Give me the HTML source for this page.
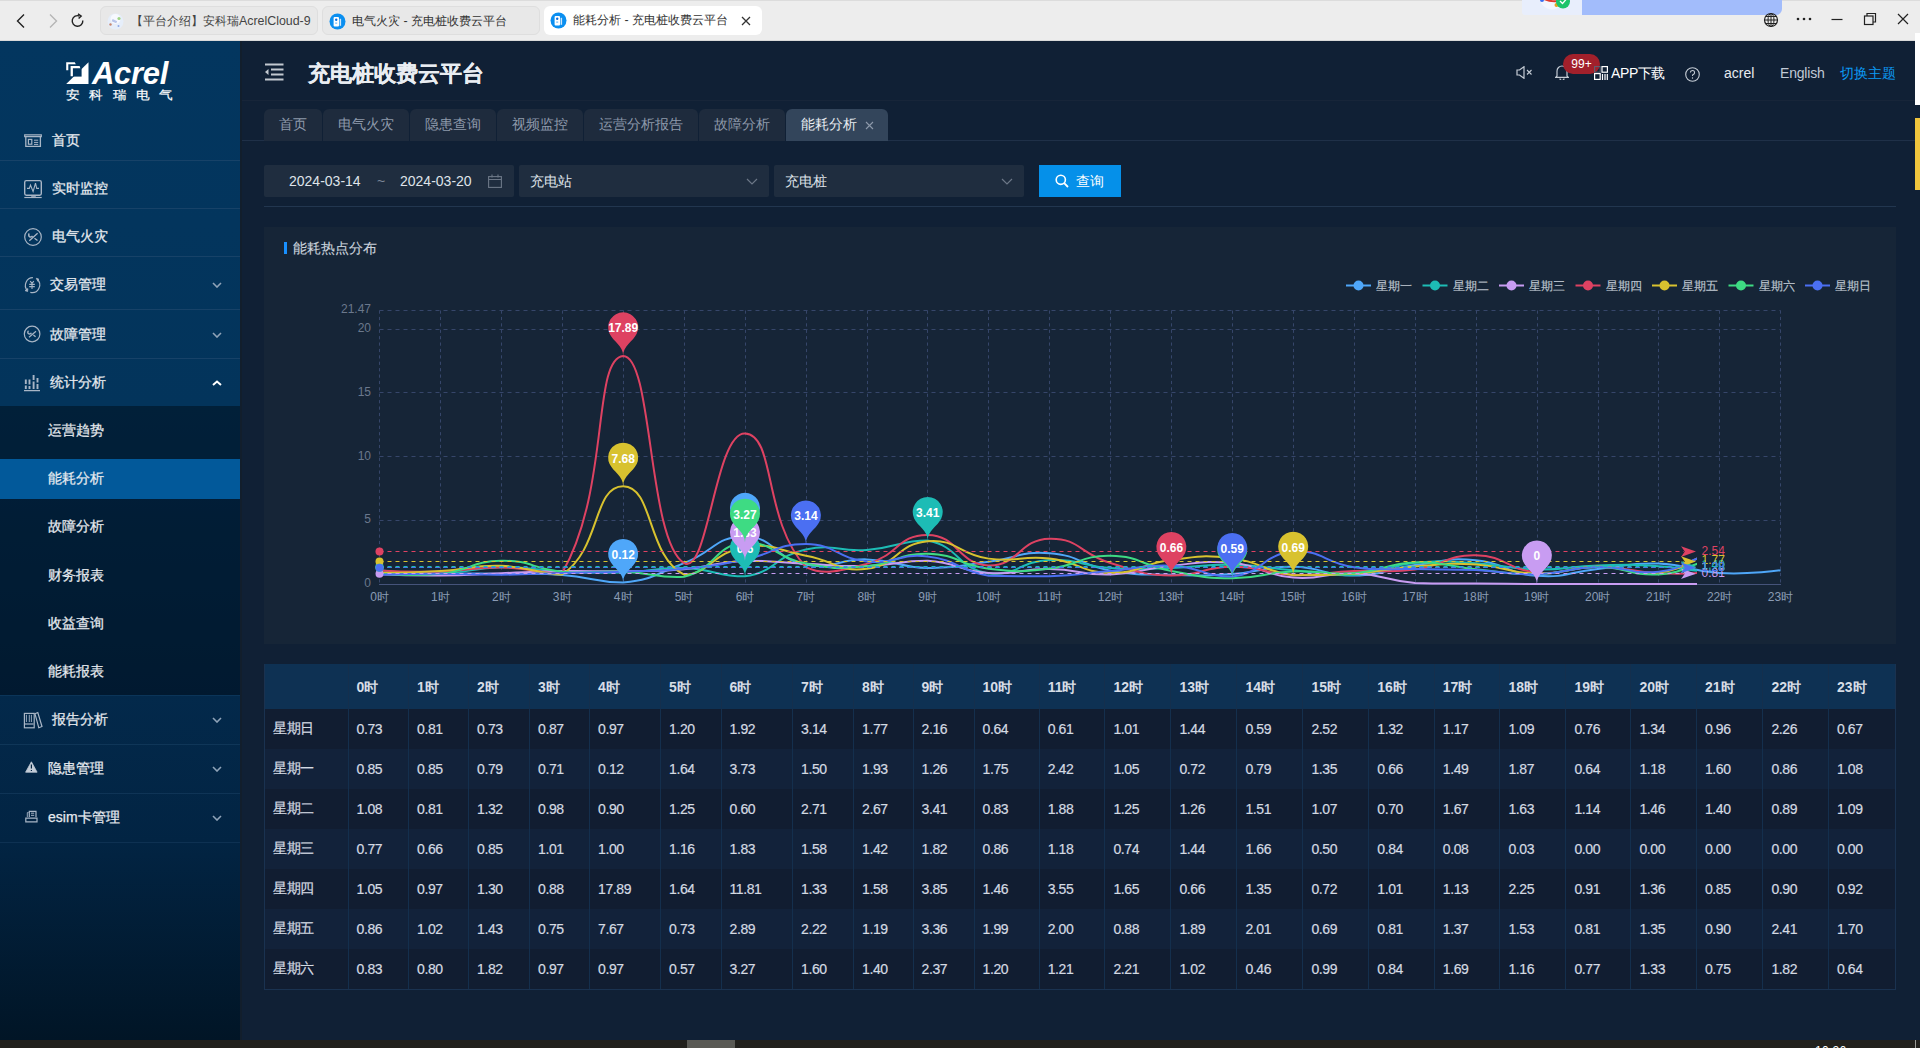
<!DOCTYPE html>
<html><head><meta charset="utf-8"><title>能耗分析 - 充电桩收费云平台</title>
<style>
*{box-sizing:border-box;margin:0;padding:0}
html,body{width:1920px;height:1048px;overflow:hidden;background:#102035;font-family:"Liberation Sans",sans-serif;}
.abs{position:absolute}
/* browser chrome */
#chrome{position:absolute;left:0;top:0;width:1920px;height:41px;background:#ededed;border-bottom:1px solid #d9d9d9}
.btab{position:absolute;top:6px;height:29px;border-radius:6px;font-size:12.4px;color:#333;line-height:29px;white-space:nowrap;overflow:hidden}
.btab .ic{position:absolute;left:8px;top:7px;width:15px;height:15px;border-radius:50%;background:#1a8ae6}
.btab .tx{position:absolute;left:33px;top:0}
/* sidebar */
#side{position:absolute;left:0;top:41px;width:240px;height:999px;background:linear-gradient(#03365f 0px,#03345b 365px,#03294b 654px,#022443 801px,#011526 999px)}
.mi{position:absolute;left:0;width:240px;font-size:14px;color:#e6eaef;-webkit-text-stroke:0.25px #e6eaef}
.mi .t{position:absolute;left:52px;top:50%;transform:translateY(-50%);white-space:nowrap}
.mi .ico{position:absolute;left:24px;top:50%;transform:translateY(-50%)}
.sep{position:absolute;left:0;width:240px;height:1px;background:#174268}
.chev{position:absolute;left:212px;width:10px;height:6px}
.sub{position:absolute;left:0;width:240px;font-size:14px;color:#e6eaef;-webkit-text-stroke:0.25px #e6eaef}
.sub .t{position:absolute;left:48px;top:50%;transform:translateY(-50%)}
/* header */
#hdr{position:absolute;left:240px;top:41px;width:1675px;height:60px;background:#102035;border-bottom:1px solid #172539}
.ttl{position:absolute;left:308px;top:59px;font-size:22px;font-weight:bold;color:#e9edf2;-webkit-text-stroke:0.15px #e9edf2;letter-spacing:0px;white-space:nowrap}
.hx{position:absolute;font-size:14px;white-space:nowrap;line-height:20px}
/* tabs */
.tg{position:absolute;top:109px;height:32px;background:#1e2b3d;border-radius:6px 6px 0 0;font-size:14px;color:#8e9aab;text-align:center;line-height:31px;white-space:nowrap;border-right:1px solid #102035}
.tg.on{background:#33455b;color:#e8ecf1;border-right:none}
/* filter */
.inp{position:absolute;top:165px;height:32px;background:#1f2d3f;border-radius:2px;font-size:14px;color:#dfe4ea;line-height:32px;white-space:nowrap}
.btn{position:absolute;left:1039px;top:165px;width:82px;height:32px;background:#0590e9;border-radius:0;color:#fff;font-size:14px;line-height:32px}
/* chart panel */
#panel{position:absolute;left:264px;top:227px;width:1632px;height:417px;background:#162537}
.yl{font-size:12px;fill:#6b788c}
.xl{font-size:12px;fill:#8a9bb4}
.ml{font-size:12px}
.mp{font-size:12px;font-weight:bold;fill:#fff;stroke-width:0}
.lg{font-size:12px;fill:#bcc4ce;stroke:#bcc4ce;stroke-width:0.15px}
/* table */
.tb{position:absolute;left:264px;top:664px;width:1631.5px;border-collapse:collapse;table-layout:fixed;font-size:14px;color:#d4dae2}
.tb td{border-left:1px solid #142f4d;border-right:1px solid #142f4d;padding:0 0 0 8px;white-space:nowrap;overflow:hidden;letter-spacing:-0.4px}
.tb tr.th td{height:45px;padding-top:2px;letter-spacing:0;background:#0e3153;font-weight:bold;color:#d6dde6}
.tb tr.r0 td,.tb tr.r1 td{-webkit-text-stroke:0.2px #d4dae2}
.tb tr.r0 td{height:40px;background:#111d31}
.tb tr.r1 td{height:40px;background:#12223a}
.tb tr td:first-child{padding-left:8px;border-left-color:#1a3250}
.tb tr td:last-child{border-right-color:#1a3250}
.tb tr:last-child td{border-bottom:1px solid #1a3250}
</style></head><body>

<!-- browser chrome -->
<div id="chrome">
  <svg class="abs" style="left:13px;top:13px" width="16" height="16" viewBox="0 0 16 16"><path d="M11 1.5 L4.5 8 L11 14.5" fill="none" stroke="#222" stroke-width="1.4"/></svg>
  <svg class="abs" style="left:45px;top:13px" width="16" height="16" viewBox="0 0 16 16"><path d="M5 1.5 L11.5 8 L5 14.5" fill="none" stroke="#b5b5b5" stroke-width="1.4"/></svg>
  <svg class="abs" style="left:70px;top:13px" width="16" height="16" viewBox="0 0 16 16"><path d="M12.8 7.5 A5.3 5.3 0 1 1 9.5 3" fill="none" stroke="#222" stroke-width="1.4"/><path d="M8 0.8 L11.2 3 L8.6 5.6" fill="none" stroke="#222" stroke-width="1.4"/></svg>
  <div class="btab" style="left:100px;width:218px;background:#e8e8e8;border:1px solid #dedede">
    <svg class="abs" style="left:6px;top:6px" width="17" height="17" viewBox="0 0 17 17"><circle cx="8.5" cy="8.5" r="8" fill="#e6eefa"/><circle cx="8.5" cy="6" r="5" fill="#f7f9fe"/><rect x="5" y="7" width="5" height="2.4" fill="#b8c4ea" transform="rotate(25 7.5 8)"/><circle cx="12" cy="5.5" r="1.6" fill="#9fd486"/><circle cx="3.5" cy="11.5" r="1.2" fill="#c9866e"/><circle cx="11.5" cy="13" r="1" fill="#8fa8e8"/></svg><div class="tx" style="left:30px;color:#444">【平台介绍】安科瑞AcrelCloud-9</div></div>
  <div class="btab" style="left:322px;width:218px;background:#e8e8e8;border:1px solid #dedede">
    <svg class="abs" style="left:6px;top:6px" width="17" height="17" viewBox="0 0 17 17"><circle cx="8.5" cy="8.5" r="8" fill="#0b8ff0"/><rect x="4.6" y="4" width="5.4" height="9.5" rx="1" fill="#fff"/><circle cx="7.2" cy="6.8" r="1.2" fill="#0b6fe0"/><rect x="6.2" y="9.6" width="2" height="1" fill="#5ab0f5"/><rect x="10.6" y="5.8" width="1.5" height="7" fill="#cfe6fb"/></svg><div class="tx" style="left:29px;color:#333">电气火灾 - 充电桩收费云平台</div></div>
  <div class="btab" style="left:544px;width:218px;background:#fff">
    <svg class="abs" style="left:6px;top:6px" width="17" height="17" viewBox="0 0 17 17"><circle cx="8.5" cy="8.5" r="8" fill="#0b8ff0"/><rect x="4.6" y="4" width="5.4" height="9.5" rx="1" fill="#fff"/><circle cx="7.2" cy="6.8" r="1.2" fill="#0b6fe0"/><rect x="6.2" y="9.6" width="2" height="1" fill="#5ab0f5"/><rect x="10.6" y="5.8" width="1.5" height="7" fill="#cfe6fb"/></svg><div class="tx" style="left:29px;color:#333">能耗分析 - 充电桩收费云平台</div>
    <svg class="abs" style="left:197px;top:10px" width="10" height="10" viewBox="0 0 10 10"><path d="M1 1L9 9M9 1L1 9" stroke="#333" stroke-width="1.3"/></svg></div>
  <div class="abs" style="left:0;top:0;width:1920px;height:1px;background:#dcdcdc"></div>
  <div class="abs" style="left:1522px;top:0;width:60px;height:15px;background:#e8eefc;border-radius:0 0 0 3px"></div>
  <svg class="abs" style="left:1522px;top:0" width="60" height="15" viewBox="0 0 60 15"><circle cx="30" cy="-3" r="12.5" fill="#f4f6fd"/><path d="M22 -1Q29 2 36 1" stroke="#e0392b" stroke-width="2" fill="none"/><circle cx="20" cy="0" r="2" fill="#3a6cf0"/><circle cx="34.5" cy="5" r="2" fill="#e8a21a"/><circle cx="41" cy="1.5" r="7" fill="#1cc46a"/><path d="M38 1L40.5 3.5L44 -0.5" stroke="#fff" stroke-width="1.3" fill="none"/></svg>
  <div class="abs" style="left:1582px;top:0;width:200px;height:15px;background:#a2bcfb;border-radius:0 0 6px 0"></div>
  <svg class="abs" style="left:1763px;top:12px" width="16" height="16" viewBox="0 0 16 16"><circle cx="8" cy="8" r="6.5" fill="none" stroke="#222" stroke-width="1.2"/><path d="M1.5 8H14.5M8 1.5V14.5M3 4.5H13M3 11.5H13" stroke="#222" stroke-width="1"/><ellipse cx="8" cy="8" rx="3" ry="6.5" fill="none" stroke="#222" stroke-width="1"/></svg>
  <svg class="abs" style="left:1795px;top:13px" width="18" height="12" viewBox="0 0 18 12"><circle cx="3" cy="6" r="1.3" fill="#222"/><circle cx="9" cy="6" r="1.3" fill="#222"/><circle cx="15" cy="6" r="1.3" fill="#222"/></svg>
  <svg class="abs" style="left:1830px;top:13px" width="14" height="14" viewBox="0 0 14 14"><path d="M1.5 6.5H12.5" stroke="#222" stroke-width="1.2"/></svg>
  <svg class="abs" style="left:1863px;top:12px" width="14" height="14" viewBox="0 0 14 14"><rect x="1.5" y="4" width="8.5" height="8.5" fill="none" stroke="#222" stroke-width="1.2"/><path d="M4 4V1.5H12.5V10H10" fill="none" stroke="#222" stroke-width="1.2"/></svg>
  <svg class="abs" style="left:1896px;top:12px" width="14" height="14" viewBox="0 0 14 14"><path d="M2 2L12 12M12 2L2 12" stroke="#222" stroke-width="1.2"/></svg>
</div>
<div class="abs" style="left:1915px;top:33px;width:5px;height:72px;background:#fff"></div>
<div class="abs" style="left:1915px;top:118px;width:5px;height:72px;background:#f0c53d"></div>

<!-- sidebar -->
<div id="side"></div>
<!-- logo -->
<svg class="abs" style="left:60px;top:58px" width="34" height="30" viewBox="60 58 34 30">
  <path d="M66.2 84 L88.5 84 L88.5 62.3 Z" fill="#fff"/><rect x="73.2" y="68.3" width="8.4" height="8.3" fill="#03355e"/>
  <path d="M66.2 62.2 H74.8 L75.8 64.2 H68.3 V70.3 H66.2 Z" fill="#fff"/>
  <path d="M70.6 66 H79.6 L80.4 68.2 H72.9 V76.2 H70.6 Z" fill="#fff"/>
</svg>
<div class="abs" style="left:92px;top:54px;font-size:31px;font-weight:bold;font-style:italic;color:#fff;line-height:40px;letter-spacing:-0.3px;transform:scaleX(1.0)">Acrel</div>
<div class="abs" style="left:66px;top:88px;font-size:14px;color:#fff;line-height:17px;letter-spacing:9.3px;white-space:nowrap;-webkit-text-stroke:0.2px #fff;transform:scaleY(0.88);transform-origin:0 0">安科瑞电气</div>


<!-- top level items -->
<div class="mi" style="top:117px;height:48px"><span class="t">首页</span></div>
<div class="sep" style="top:160px"></div>
<div class="mi" style="top:165px;height:48px"><span class="t">实时监控</span></div>
<div class="sep" style="top:208px"></div>
<div class="mi" style="top:213px;height:48px"><span class="t">电气火灾</span></div>
<div class="sep" style="top:256px"></div>
<div class="mi" style="top:259px;height:52px"><span class="t" style="left:50px">交易管理</span>
<svg class="chev" style="top:23px" viewBox="0 0 10 6"><path d="M1 1L5 5L9 1" fill="none" stroke="#8fa3b8" stroke-width="1.6"/></svg></div>
<div class="sep" style="top:309px"></div>
<div class="mi" style="top:311px;height:48px"><span class="t" style="left:50px">故障管理</span>
<svg class="chev" style="top:21px" viewBox="0 0 10 6"><path d="M1 1L5 5L9 1" fill="none" stroke="#8fa3b8" stroke-width="1.6"/></svg></div>
<div class="sep" style="top:358px"></div>
<div class="mi" style="top:359px;height:48px"><span class="t" style="left:50px">统计分析</span>
<svg class="chev" style="top:21px" viewBox="0 0 10 6"><path d="M1 5L5 1.5L9 5" fill="none" stroke="#fff" stroke-width="2"/></svg></div>

<!-- submenu -->
<div class="abs" style="left:0;top:406px;width:240px;height:289px;background:rgba(0,4,12,0.42)"></div>
<div class="sub" style="top:407px;height:48px"><span class="t">运营趋势</span></div>
<div class="sub" style="top:459px;height:40px;background:#02599a"><span class="t">能耗分析</span></div>
<div class="sub" style="top:503px;height:48px"><span class="t">故障分析</span></div>
<div class="sub" style="top:552px;height:48px"><span class="t">财务报表</span></div>
<div class="sub" style="top:600px;height:48px"><span class="t">收益查询</span></div>
<div class="sub" style="top:648px;height:48px"><span class="t">能耗报表</span></div>

<!-- lower items -->

<div class="sep" style="top:695px;background:#0b3559"></div>
<div class="mi" style="top:695px;height:49px"><span class="t">报告分析</span>
<svg class="chev" style="top:22px" viewBox="0 0 10 6"><path d="M1 1L5 5L9 1" fill="none" stroke="#8fa3b8" stroke-width="1.6"/></svg></div>
<div class="sep" style="top:744px;background:#0f3658"></div>
<div class="mi" style="top:744px;height:49px"><span class="t" style="left:48px">隐患管理</span>
<svg class="chev" style="top:22px" viewBox="0 0 10 6"><path d="M1 1L5 5L9 1" fill="none" stroke="#8fa3b8" stroke-width="1.6"/></svg></div>
<div class="sep" style="top:793px;background:#0f3456"></div>
<div class="mi" style="top:793px;height:49px"><span class="t" style="left:48px">esim卡管理</span>
<svg class="chev" style="top:22px" viewBox="0 0 10 6"><path d="M1 1L5 5L9 1" fill="none" stroke="#8fa3b8" stroke-width="1.6"/></svg></div>
<div class="sep" style="top:842px;background:#0e3152"></div>

<svg class="abs" style="left:0;top:0;overflow:visible" width="240" height="1048" viewBox="0 0 240 1048">
<g fill="none" stroke="#a9b6c6">
 <!-- home -->
 <path d="M24.7 134.8H41.3V136.6H24.7Z" stroke-width="1.2" fill="none"/>
 <path d="M25.8 136.6V146.4H40.4V136.6" stroke-width="1.3"/>
 <rect x="28.4" y="139.4" width="3.4" height="4.8" stroke-width="1.2"/>
 <path d="M34 140.2H38.2M34 142.4H38.2M34 144.4H38.2" stroke-width="1"/>
 <!-- monitor -->
 <rect x="24.7" y="180.6" width="16.6" height="14.6" rx="1.6" stroke-width="1.4"/>
 <path d="M27 188.4H29.3L30.5 185L33.1 191.6L35.5 183.2L36.7 188.4H39" stroke-width="1.1"/>
 <path d="M31.2 196H35.8" stroke-width="1.6"/>
 <path d="M24.3 197.5H41.7" stroke-width="1.2"/>
 <!-- tools circle 1 -->
 <circle cx="33" cy="237" r="8.3" stroke-width="1.2"/>
 <path d="M29.3 240.8L37.6 233.2M34.5 238.2L37.5 240.6" stroke-width="1.3"/>
 <path d="M29.3 233.5A2 2 0 1 0 32.5 235.8" stroke-width="1.5"/>
 <!-- exchange -->
 <path d="M32.9 277.7A7.6 7.6 0 0 0 27.2 290.2" stroke-width="1.2"/>
 <path d="M30.3 292.3A7.6 7.6 0 0 0 37.1 279.2" stroke-width="1.2"/>
 <path d="M25 290.6L27.8 288.6L27.6 291.5Z" fill="#a9b6c6" stroke-width="0.8"/>
 <path d="M36.3 278.3L38.7 279L37.9 281.3Z" fill="#a9b6c6" stroke-width="0.8"/>
 <path d="M30.2 281.2L32 283.4L33.8 281.2M29.2 284.4H34.8M29.2 286.6H34.8M32 283.4V289" stroke-width="1.1"/>
 <!-- tools circle 2 -->
 <circle cx="32.1" cy="334" r="7.8" stroke-width="1.2"/>
 <path d="M29 337.2L36 331.2M33.4 335L35.6 336.8" stroke-width="1.2"/>
 <path d="M28.5 330.8A1.8 1.8 0 1 0 31.3 332.8" stroke-width="1.4"/>
 <!-- stats -->
 <path d="M24 390.6H40" stroke-width="1.3"/>
 <path d="M25.8 379.5V384M25.8 385.5V389M29.5 379.6V384.5M29.5 386V389M33.6 375V380M33.6 381.5V389M37.5 378V382.5M37.5 384V389" stroke-width="1.9"/>
 <!-- report -->
 <rect x="24.4" y="713.4" width="9.8" height="14.4" stroke-width="1.2"/>
 <path d="M26.4 714.8V722M29.3 714.8V722M31.4 714.8V722" stroke-width="0.9"/>
 <path d="M25 724H33.6" stroke-width="1.2"/>
 <path d="M35 713.8L37.8 712.5L42 726.5L38.8 727.8Z" stroke-width="1.2"/>
 <!-- esim -->
 <path d="M29.3 817V811.3H36V817" stroke-width="1.2"/>
 <path d="M28.6 812.6H27.3V817" stroke-width="0.9"/>
 <path d="M31 813.2H34.2M31 815.3H34.2" stroke-width="1"/>
 <path d="M25.8 818.2H37V821.8H25.8Z" stroke-width="1.2"/>
</g>
 <!-- warning -->
 <path d="M31.4 761.8L37.1 772.2H25.6Z" fill="#c3ccd7" stroke="#c3ccd7" stroke-width="0.8" stroke-linejoin="round"/>
 <path d="M31.4 764.6V768.6M31.4 769.9V770.9" stroke="#02223f" stroke-width="1.2"/>
</svg>


<!-- header -->
<div id="hdr"></div>
<svg class="abs" style="left:265px;top:63px" width="19" height="18" viewBox="0 0 19 18"><path d="M0 1.5H18.5M6 6.5H18.5M6 11.5H18.5M0 16.5H18.5" stroke="#c2c8d0" stroke-width="2"/><path d="M0 9L3.5 6V12Z" fill="#c2c8d0"/></svg>
<div class="ttl">充电桩收费云平台</div>
<!-- right icons -->
<svg class="abs" style="left:1516px;top:66px" width="18" height="13" viewBox="0 0 18 13"><path d="M1 4H3.5L8 0.7V12.3L3.5 9H1Z" fill="none" stroke="#c5ccd5" stroke-width="1.2"/><path d="M11 4L15.5 8.5M15.5 4L11 8.5" stroke="#c5ccd5" stroke-width="1.1"/></svg>
<svg class="abs" style="left:1555px;top:64px" width="14" height="16" viewBox="0 0 14 16"><path d="M2 12V7A5 5 0 0 1 12 7V12L13.3 13.3H0.7Z" fill="none" stroke="#c5ccd5" stroke-width="1.2"/><path d="M5 14.5A2 2 0 0 0 9 14.5" fill="none" stroke="#c5ccd5" stroke-width="1.2"/></svg>
<div class="abs" style="left:1563px;top:54px;width:37px;height:20px;border-radius:10px;background:#a2202b;color:#fff;font-size:12px;line-height:20px;text-align:center">99+</div>
<svg class="abs" style="left:1594px;top:66px" width="14" height="14" viewBox="0 0 14 14"><rect x="0.6" y="7.6" width="5.6" height="5.8" fill="none" stroke="#fff" stroke-width="1.2"/><rect x="8" y="0.6" width="5.4" height="5.6" fill="none" stroke="#fff" stroke-width="1.2"/><path d="M8.5 8V14M11 8V14M13.3 8V14" stroke="#fff" stroke-width="1.2"/><rect x="0.6" y="0.6" width="5.6" height="5.6" fill="none" stroke="#5a6577" stroke-width="1"/></svg>
<div class="hx" style="left:1611px;top:63px;color:#fff;letter-spacing:-0.4px">APP下载</div>
<svg class="abs" style="left:1685px;top:67px" width="15" height="15" viewBox="0 0 15 15"><circle cx="7.5" cy="7.5" r="6.8" fill="none" stroke="#c5ccd5" stroke-width="1.1"/><path d="M5.4 5.6A2.1 2.1 0 1 1 8 7.6C7.5 7.8 7.5 8.3 7.5 9" fill="none" stroke="#c5ccd5" stroke-width="1.1"/><circle cx="7.5" cy="11" r="0.7" fill="#c5ccd5"/></svg>
<div class="hx" style="left:1724px;top:63px;color:#e6eaef">acrel</div>
<div class="hx" style="left:1780px;top:63px;color:#c2cad6;letter-spacing:-0.2px">English</div>
<div class="hx" style="left:1840px;top:63px;color:#0c99f3">切换主题</div>

<!-- tabs -->
<div class="abs" style="left:240px;top:140px;width:1675px;height:1px;background:#1f3048"></div>
<div class="tg" style="left:264px;width:59px">首页</div>
<div class="tg" style="left:323px;width:87px">电气火灾</div>
<div class="tg" style="left:410px;width:87px">隐患查询</div>
<div class="tg" style="left:497px;width:87px">视频监控</div>
<div class="tg" style="left:584px;width:115px">运营分析报告</div>
<div class="tg" style="left:699px;width:87px">故障分析</div>
<div class="tg on" style="left:786px;width:102px;text-align:left;padding-left:15px">能耗分析<svg class="abs" style="left:79px;top:12px" width="9" height="9" viewBox="0 0 9 9"><path d="M1 1L8 8M8 1L1 8" stroke="#8e9aab" stroke-width="1.1"/></svg></div>

<!-- filters -->
<div class="inp" style="left:264px;width:250px"><span class="abs" style="left:25px">2024-03-14</span><span class="abs" style="left:113px;color:#7d8898">~</span><span class="abs" style="left:136px">2024-03-20</span>
<svg class="abs" style="left:224px;top:9px" width="14" height="14" viewBox="0 0 14 14"><rect x="0.6" y="2.6" width="12.8" height="10.8" fill="none" stroke="#6c7787" stroke-width="1.1"/><path d="M0.6 5.5H13.4M4 0.5V3.5M10 0.5V3.5" stroke="#6c7787" stroke-width="1.1"/></svg></div>
<div class="inp" style="left:519px;width:250px"><span class="abs" style="left:11px">充电站</span><svg class="abs" style="left:227px;top:13px" width="12" height="8" viewBox="0 0 12 8"><path d="M1 1L6 6L11 1" fill="none" stroke="#6c7787" stroke-width="1.2"/></svg></div>
<div class="inp" style="left:774px;width:250px"><span class="abs" style="left:11px">充电桩</span><svg class="abs" style="left:227px;top:13px" width="12" height="8" viewBox="0 0 12 8"><path d="M1 1L6 6L11 1" fill="none" stroke="#6c7787" stroke-width="1.2"/></svg></div>
<div class="btn"><svg class="abs" style="left:16px;top:9px" width="14" height="14" viewBox="0 0 14 14"><circle cx="5.8" cy="5.8" r="4.6" fill="none" stroke="#fff" stroke-width="1.6"/><path d="M9.2 9.2L13 13" stroke="#fff" stroke-width="1.8"/></svg><span class="abs" style="left:37px">查询</span></div>
<div class="abs" style="left:264px;top:206px;width:1632px;height:1px;background:#22364f"></div>


<div class="abs" style="left:240px;top:41px;width:2px;height:999px;background:#121e2c"></div>
<!-- chart panel -->
<div id="panel"></div>
<div class="abs" style="left:284px;top:242px;width:3px;height:12px;background:#1890ff"></div>
<div class="abs" style="left:293px;top:239px;font-size:14px;color:#c9d1db;line-height:18px;-webkit-text-stroke:0.15px #c9d1db">能耗热点分布</div>
<svg width="1920" height="1048" viewBox="0 0 1920 1048" style="position:absolute;left:0;top:0">
<defs><clipPath id="clp"><rect x="300" y="280" width="1397" height="330"/></clipPath></defs>
<line x1="379.5" y1="520.5" x2="1780.5" y2="520.5" stroke="#36466a" stroke-width="1" stroke-dasharray="4 4"/>
<line x1="379.5" y1="456.5" x2="1780.5" y2="456.5" stroke="#36466a" stroke-width="1" stroke-dasharray="4 4"/>
<line x1="379.5" y1="392.5" x2="1780.5" y2="392.5" stroke="#36466a" stroke-width="1" stroke-dasharray="4 4"/>
<line x1="379.5" y1="329.5" x2="1780.5" y2="329.5" stroke="#36466a" stroke-width="1" stroke-dasharray="4 4"/>
<line x1="379.5" y1="310.5" x2="1780.5" y2="310.5" stroke="#36466a" stroke-width="1" stroke-dasharray="4 4"/>
<line x1="379.5" y1="310.5" x2="379.5" y2="584" stroke="#36466a" stroke-width="1" stroke-dasharray="3.2 3.2"/>
<line x1="440.5" y1="310.5" x2="440.5" y2="584" stroke="#36466a" stroke-width="1" stroke-dasharray="3.2 3.2"/>
<line x1="501.5" y1="310.5" x2="501.5" y2="584" stroke="#36466a" stroke-width="1" stroke-dasharray="3.2 3.2"/>
<line x1="562.5" y1="310.5" x2="562.5" y2="584" stroke="#36466a" stroke-width="1" stroke-dasharray="3.2 3.2"/>
<line x1="623.5" y1="310.5" x2="623.5" y2="584" stroke="#36466a" stroke-width="1" stroke-dasharray="3.2 3.2"/>
<line x1="684.5" y1="310.5" x2="684.5" y2="584" stroke="#36466a" stroke-width="1" stroke-dasharray="3.2 3.2"/>
<line x1="745.5" y1="310.5" x2="745.5" y2="584" stroke="#36466a" stroke-width="1" stroke-dasharray="3.2 3.2"/>
<line x1="806.5" y1="310.5" x2="806.5" y2="584" stroke="#36466a" stroke-width="1" stroke-dasharray="3.2 3.2"/>
<line x1="867.5" y1="310.5" x2="867.5" y2="584" stroke="#36466a" stroke-width="1" stroke-dasharray="3.2 3.2"/>
<line x1="927.5" y1="310.5" x2="927.5" y2="584" stroke="#36466a" stroke-width="1" stroke-dasharray="3.2 3.2"/>
<line x1="988.5" y1="310.5" x2="988.5" y2="584" stroke="#36466a" stroke-width="1" stroke-dasharray="3.2 3.2"/>
<line x1="1049.5" y1="310.5" x2="1049.5" y2="584" stroke="#36466a" stroke-width="1" stroke-dasharray="3.2 3.2"/>
<line x1="1110.5" y1="310.5" x2="1110.5" y2="584" stroke="#36466a" stroke-width="1" stroke-dasharray="3.2 3.2"/>
<line x1="1171.5" y1="310.5" x2="1171.5" y2="584" stroke="#36466a" stroke-width="1" stroke-dasharray="3.2 3.2"/>
<line x1="1232.5" y1="310.5" x2="1232.5" y2="584" stroke="#36466a" stroke-width="1" stroke-dasharray="3.2 3.2"/>
<line x1="1293.5" y1="310.5" x2="1293.5" y2="584" stroke="#36466a" stroke-width="1" stroke-dasharray="3.2 3.2"/>
<line x1="1354.5" y1="310.5" x2="1354.5" y2="584" stroke="#36466a" stroke-width="1" stroke-dasharray="3.2 3.2"/>
<line x1="1415.5" y1="310.5" x2="1415.5" y2="584" stroke="#36466a" stroke-width="1" stroke-dasharray="3.2 3.2"/>
<line x1="1476.5" y1="310.5" x2="1476.5" y2="584" stroke="#36466a" stroke-width="1" stroke-dasharray="3.2 3.2"/>
<line x1="1537.5" y1="310.5" x2="1537.5" y2="584" stroke="#36466a" stroke-width="1" stroke-dasharray="3.2 3.2"/>
<line x1="1598.5" y1="310.5" x2="1598.5" y2="584" stroke="#36466a" stroke-width="1" stroke-dasharray="3.2 3.2"/>
<line x1="1658.5" y1="310.5" x2="1658.5" y2="584" stroke="#36466a" stroke-width="1" stroke-dasharray="3.2 3.2"/>
<line x1="1719.5" y1="310.5" x2="1719.5" y2="584" stroke="#36466a" stroke-width="1" stroke-dasharray="3.2 3.2"/>
<line x1="1780.5" y1="310.5" x2="1780.5" y2="584" stroke="#36466a" stroke-width="1" stroke-dasharray="3.2 3.2"/>
<line x1="379.0" y1="584.5" x2="1781.0" y2="584.5" stroke="#45537a" stroke-width="1"/>
<text x="371" y="583.0" text-anchor="end" dominant-baseline="central" class="yl">0</text>
<text x="371" y="519.2" text-anchor="end" dominant-baseline="central" class="yl">5</text>
<text x="371" y="455.5" text-anchor="end" dominant-baseline="central" class="yl">10</text>
<text x="371" y="391.7" text-anchor="end" dominant-baseline="central" class="yl">15</text>
<text x="371" y="328.0" text-anchor="end" dominant-baseline="central" class="yl">20</text>
<text x="371" y="309.2" text-anchor="end" dominant-baseline="central" class="yl">21.47</text>
<text x="379.5" y="596.5" text-anchor="middle" dominant-baseline="central" class="xl">0时</text>
<text x="440.4" y="596.5" text-anchor="middle" dominant-baseline="central" class="xl">1时</text>
<text x="501.3" y="596.5" text-anchor="middle" dominant-baseline="central" class="xl">2时</text>
<text x="562.2" y="596.5" text-anchor="middle" dominant-baseline="central" class="xl">3时</text>
<text x="623.2" y="596.5" text-anchor="middle" dominant-baseline="central" class="xl">4时</text>
<text x="684.1" y="596.5" text-anchor="middle" dominant-baseline="central" class="xl">5时</text>
<text x="745.0" y="596.5" text-anchor="middle" dominant-baseline="central" class="xl">6时</text>
<text x="805.9" y="596.5" text-anchor="middle" dominant-baseline="central" class="xl">7时</text>
<text x="866.8" y="596.5" text-anchor="middle" dominant-baseline="central" class="xl">8时</text>
<text x="927.7" y="596.5" text-anchor="middle" dominant-baseline="central" class="xl">9时</text>
<text x="988.6" y="596.5" text-anchor="middle" dominant-baseline="central" class="xl">10时</text>
<text x="1049.5" y="596.5" text-anchor="middle" dominant-baseline="central" class="xl">11时</text>
<text x="1110.5" y="596.5" text-anchor="middle" dominant-baseline="central" class="xl">12时</text>
<text x="1171.4" y="596.5" text-anchor="middle" dominant-baseline="central" class="xl">13时</text>
<text x="1232.3" y="596.5" text-anchor="middle" dominant-baseline="central" class="xl">14时</text>
<text x="1293.2" y="596.5" text-anchor="middle" dominant-baseline="central" class="xl">15时</text>
<text x="1354.1" y="596.5" text-anchor="middle" dominant-baseline="central" class="xl">16时</text>
<text x="1415.0" y="596.5" text-anchor="middle" dominant-baseline="central" class="xl">17时</text>
<text x="1475.9" y="596.5" text-anchor="middle" dominant-baseline="central" class="xl">18时</text>
<text x="1536.8" y="596.5" text-anchor="middle" dominant-baseline="central" class="xl">19时</text>
<text x="1597.8" y="596.5" text-anchor="middle" dominant-baseline="central" class="xl">20时</text>
<text x="1658.7" y="596.5" text-anchor="middle" dominant-baseline="central" class="xl">21时</text>
<text x="1719.6" y="596.5" text-anchor="middle" dominant-baseline="central" class="xl">22时</text>
<text x="1780.5" y="596.5" text-anchor="middle" dominant-baseline="central" class="xl">23时</text>
<g fill="none" stroke-width="2" stroke-linejoin="round">
<path d="M379.50 573.16 C379.50 573.16 409.96 572.97 440.41 573.16 C470.87 573.35 470.87 573.48 501.33 573.93 C531.78 574.37 531.90 572.82 562.24 574.95 C592.81 577.09 593.31 582.47 623.15 582.47 C654.23 579.45 654.21 574.37 684.07 563.09 C715.12 551.36 714.69 536.44 744.98 536.44 C775.60 536.89 774.00 558.87 805.89 564.87 C834.91 570.34 836.43 558.63 866.80 559.39 C897.35 560.16 897.19 567.36 927.72 567.93 C958.11 568.51 958.24 565.38 988.63 561.69 C1019.16 557.98 1019.54 550.95 1049.54 553.14 C1080.45 555.41 1079.43 565.09 1110.46 570.61 C1140.35 575.93 1140.88 573.99 1171.37 574.82 C1201.79 575.65 1201.93 575.93 1232.28 573.93 C1262.84 571.91 1262.79 566.37 1293.20 566.79 C1323.71 567.20 1323.72 576.03 1354.11 575.58 C1384.63 575.14 1384.39 568.88 1415.02 565.00 C1445.30 561.17 1445.92 557.49 1475.93 560.16 C1506.83 562.91 1506.00 573.61 1536.85 575.84 C1566.91 578.01 1567.27 572.02 1597.76 568.95 C1628.18 565.90 1628.34 562.58 1658.67 563.60 C1689.25 564.62 1688.97 571.37 1719.59 573.03 C1749.88 574.68 1780.50 570.23 1780.50 570.23" stroke="#4fa7f9"/>
<path d="M379.50 570.23 C379.50 570.23 410.02 574.44 440.41 573.67 C470.93 572.91 470.82 567.71 501.33 567.17 C531.73 566.63 531.75 570.16 562.24 571.50 C592.66 572.84 592.73 573.38 623.15 572.52 C653.65 571.66 653.71 567.11 684.07 568.06 C714.62 569.02 715.74 576.35 744.98 576.35 C776.65 571.51 774.08 556.34 805.89 549.45 C834.99 543.14 836.53 552.17 866.80 549.96 C897.44 547.71 899.03 540.52 927.72 540.52 C959.94 546.73 956.59 568.29 988.63 573.42 C1017.50 576.35 1018.86 561.38 1049.54 560.03 C1079.77 558.70 1079.87 566.08 1110.46 568.06 C1140.78 570.03 1140.93 568.76 1171.37 567.93 C1201.85 567.11 1201.87 564.14 1232.28 564.75 C1262.78 565.35 1262.72 567.77 1293.20 570.36 C1323.63 572.94 1323.91 576.35 1354.11 575.07 C1384.83 573.15 1384.26 565.70 1415.02 562.71 C1445.17 559.77 1445.56 561.53 1475.93 563.22 C1506.47 564.91 1506.35 568.92 1536.85 569.46 C1567.26 570.01 1567.27 566.21 1597.76 565.38 C1628.18 564.56 1628.30 564.34 1658.67 566.15 C1689.22 567.97 1689.06 571.66 1719.59 572.65 C1749.97 573.64 1780.50 570.10 1780.50 570.10" stroke="#1dbcb5" clip-path="url(#clp)"/>
<path d="M379.50 574.18 C379.50 574.18 409.96 575.84 440.41 575.58 C470.88 575.33 470.87 574.28 501.33 573.16 C531.78 572.05 531.77 571.60 562.24 571.12 C592.69 570.64 592.70 571.73 623.15 571.25 C653.62 570.77 653.75 571.84 684.07 569.21 C714.66 566.55 714.39 562.01 744.98 560.67 C775.31 560.67 775.42 562.55 805.89 563.85 C836.34 565.16 836.39 566.66 866.80 565.89 C897.31 565.13 897.51 560.67 927.72 560.79 C958.42 562.59 957.91 570.98 988.63 573.03 C1018.82 575.06 1019.12 568.57 1049.54 568.95 C1080.03 569.34 1080.10 575.39 1110.46 574.56 C1141.01 573.73 1140.77 568.59 1171.37 565.64 C1201.68 562.72 1202.25 560.67 1232.28 562.83 C1263.16 565.87 1262.34 574.98 1293.20 577.62 C1323.25 580.20 1323.80 571.96 1354.11 573.29 C1384.72 574.64 1384.38 580.38 1415.02 582.98 C1445.29 584.00 1445.48 583.36 1475.93 583.62 C1506.39 583.87 1506.39 583.90 1536.85 584.00 C1567.30 584.00 1567.30 584.00 1597.76 584.00 C1628.22 584.00 1628.22 584.00 1658.67 584.00 C1689.13 584.00 1689.13 584.00 1719.59 584.00 C1750.04 584.00 1780.50 584.00 1780.50 584.00" stroke="#c89cf2" clip-path="url(#clp)"/>
<path d="M379.50 570.61 C379.50 570.61 409.99 572.43 440.41 571.63 C470.90 570.83 470.89 567.14 501.33 567.42 C531.80 567.71 549.23 575.58 562.24 572.78 C610.15 489.59 592.05 358.37 623.15 355.90 C652.97 355.90 647.45 539.79 684.07 563.09 C708.36 575.58 714.90 432.44 744.98 433.42 C775.81 434.42 762.85 520.96 805.89 567.04 C823.77 575.58 837.88 571.48 866.80 563.85 C898.79 555.42 897.41 534.53 927.72 534.91 C958.32 535.30 957.81 564.42 988.63 565.38 C1018.72 566.33 1018.87 539.35 1049.54 538.74 C1079.78 538.13 1079.20 553.51 1110.46 562.96 C1140.12 571.93 1140.75 574.62 1171.37 575.58 C1201.66 575.58 1201.80 566.98 1232.28 566.79 C1262.71 566.60 1262.64 573.73 1293.20 574.82 C1323.55 575.58 1323.63 572.43 1354.11 571.12 C1384.54 569.82 1384.97 573.49 1415.02 569.59 C1445.88 565.59 1445.65 554.61 1475.93 555.31 C1506.56 556.02 1505.88 569.51 1536.85 572.40 C1566.80 575.19 1567.32 566.47 1597.76 566.66 C1628.24 566.85 1628.13 571.69 1658.67 573.16 C1689.04 574.62 1689.13 572.75 1719.59 572.52 C1750.04 572.30 1780.50 572.27 1780.50 572.27" stroke="#de4262" clip-path="url(#clp)"/>
<path d="M379.50 573.03 C379.50 573.03 410.00 572.81 440.41 570.99 C470.92 569.17 470.97 564.91 501.33 565.77 C531.88 566.63 540.03 575.20 562.24 574.44 C600.94 549.16 592.73 486.20 623.15 486.20 C653.64 486.27 646.52 555.91 684.07 574.69 C707.43 575.20 713.25 552.10 744.98 547.15 C774.17 542.60 775.63 550.31 805.89 555.69 C836.55 561.15 837.43 572.33 866.80 568.83 C898.34 565.06 896.43 543.78 927.72 541.16 C957.35 538.68 957.57 554.21 988.63 558.63 C1018.49 562.88 1019.49 555.01 1049.54 558.50 C1080.41 562.08 1079.93 572.43 1110.46 572.78 C1140.84 573.13 1140.58 563.54 1171.37 559.90 C1201.50 556.34 1202.38 554.62 1232.28 558.37 C1263.29 562.27 1262.18 571.31 1293.20 575.20 C1323.10 575.20 1323.75 575.20 1354.11 573.67 C1384.66 571.50 1384.47 568.83 1415.02 566.53 C1445.38 564.24 1445.64 562.72 1475.93 564.49 C1506.55 566.29 1506.32 573.10 1536.85 573.67 C1567.23 574.24 1567.27 567.07 1597.76 566.79 C1628.19 566.50 1628.88 575.20 1658.67 572.52 C1689.79 569.07 1688.57 555.87 1719.59 553.27 C1749.48 550.77 1780.50 562.32 1780.50 562.32" stroke="#d8c22f" clip-path="url(#clp)"/>
<path d="M379.50 573.42 C379.50 573.42 410.30 576.92 440.41 573.80 C471.21 570.61 470.77 561.34 501.33 560.79 C531.68 560.25 531.55 568.90 562.24 571.63 C592.46 574.32 592.75 570.36 623.15 571.63 C653.66 572.91 655.66 578.13 684.07 576.73 C716.58 568.91 713.29 545.72 744.98 542.31 C774.20 542.31 774.57 557.47 805.89 563.60 C835.48 569.39 836.64 568.58 866.80 566.15 C897.56 563.67 897.40 553.15 927.72 553.78 C958.31 554.42 957.73 564.95 988.63 568.70 C1018.64 572.34 1019.41 571.76 1049.54 568.57 C1080.33 565.32 1080.13 555.22 1110.46 555.82 C1141.04 556.43 1140.56 565.35 1171.37 570.99 C1201.47 576.51 1201.82 578.04 1232.28 578.13 C1262.73 578.13 1262.65 572.59 1293.20 571.38 C1323.57 570.17 1323.88 575.50 1354.11 573.29 C1384.80 571.04 1384.42 563.48 1415.02 562.45 C1445.33 561.44 1445.44 566.27 1475.93 569.21 C1506.35 572.14 1506.44 574.72 1536.85 574.18 C1567.36 573.64 1567.31 566.98 1597.76 567.04 C1628.22 567.11 1628.48 575.99 1658.67 574.44 C1689.39 572.86 1689.21 560.44 1719.59 560.79 C1750.12 561.15 1780.50 575.84 1780.50 575.84" stroke="#3edb83" clip-path="url(#clp)"/>
<path d="M379.50 574.69 C379.50 574.69 409.96 573.67 440.41 573.67 C470.87 573.67 470.87 574.88 501.33 574.69 C531.79 574.50 531.78 573.67 562.24 572.91 C592.69 572.14 592.71 572.68 623.15 571.63 C653.62 570.58 653.76 571.71 684.07 568.70 C714.68 565.66 714.83 565.64 744.98 559.52 C775.74 553.27 775.56 543.96 805.89 543.96 C836.47 544.44 835.80 558.25 866.80 561.43 C896.71 564.50 897.94 552.94 927.72 556.46 C958.86 560.14 957.44 570.78 988.63 575.84 C1018.35 576.48 1019.14 576.48 1049.54 576.22 C1080.05 575.04 1080.01 573.77 1110.46 571.12 C1140.92 568.48 1141.09 564.31 1171.37 565.64 C1202.00 566.99 1202.74 576.48 1232.28 576.48 C1263.65 572.93 1262.05 554.25 1293.20 551.87 C1322.97 549.59 1323.19 562.80 1354.11 567.17 C1384.11 571.41 1384.56 568.35 1415.02 569.08 C1445.47 569.82 1445.51 568.80 1475.93 570.10 C1506.43 571.41 1506.47 575.10 1536.85 574.31 C1567.38 573.51 1567.24 567.55 1597.76 566.91 C1628.15 566.28 1628.71 574.64 1658.67 571.76 C1689.63 568.78 1689.39 554.27 1719.59 555.18 C1750.30 556.12 1780.50 575.46 1780.50 575.46" stroke="#4b6ff2" clip-path="url(#clp)"/>
</g>
<line x1="379.5" y1="567.50" x2="1684" y2="567.50" stroke="#4fa7f9" stroke-width="1" stroke-dasharray="4 4"/>
<circle cx="379.5" cy="567.62" r="4" fill="#4fa7f9"/>
<path d="M1696.0 567.62 L1681.0 562.32 L1684.8 567.62 L1681.0 572.92 Z" fill="#4fa7f9"/>
<text x="1701.5" y="566.62" dominant-baseline="central" class="ml" fill="#4fa7f9">1.28</text>
<line x1="379.5" y1="566.50" x2="1684" y2="566.50" stroke="#1dbcb5" stroke-width="1" stroke-dasharray="4 4"/>
<circle cx="379.5" cy="566.20" r="4" fill="#1dbcb5"/>
<path d="M1696.0 566.20 L1681.0 560.90 L1684.8 566.20 L1681.0 571.50 Z" fill="#1dbcb5"/>
<text x="1701.5" y="565.20" dominant-baseline="central" class="ml" fill="#1dbcb5">1.40</text>
<line x1="379.5" y1="573.50" x2="1684" y2="573.50" stroke="#c89cf2" stroke-width="1" stroke-dasharray="4 4"/>
<circle cx="379.5" cy="573.68" r="4" fill="#c89cf2"/>
<path d="M1696.0 573.68 L1681.0 568.38 L1684.8 573.68 L1681.0 578.98 Z" fill="#c89cf2"/>
<text x="1701.5" y="572.68" dominant-baseline="central" class="ml" fill="#c89cf2">0.81</text>
<line x1="379.5" y1="551.50" x2="1684" y2="551.50" stroke="#de4262" stroke-width="1" stroke-dasharray="4 4"/>
<circle cx="379.5" cy="551.58" r="4" fill="#de4262"/>
<path d="M1696.0 551.58 L1681.0 546.28 L1684.8 551.58 L1681.0 556.88 Z" fill="#de4262"/>
<text x="1701.5" y="550.58" dominant-baseline="central" class="ml" fill="#de4262">2.54</text>
<line x1="379.5" y1="561.50" x2="1684" y2="561.50" stroke="#d8c22f" stroke-width="1" stroke-dasharray="4 4"/>
<circle cx="379.5" cy="561.44" r="4" fill="#d8c22f"/>
<path d="M1696.0 561.44 L1681.0 556.14 L1684.8 561.44 L1681.0 566.74 Z" fill="#d8c22f"/>
<text x="1701.5" y="560.44" dominant-baseline="central" class="ml" fill="#d8c22f">1.77</text>
<line x1="379.5" y1="567.50" x2="1684" y2="567.50" stroke="#3edb83" stroke-width="1" stroke-dasharray="4 4"/>
<circle cx="379.5" cy="567.70" r="4" fill="#3edb83"/>
<path d="M1696.0 567.70 L1681.0 562.40 L1684.8 567.70 L1681.0 573.00 Z" fill="#3edb83"/>
<text x="1701.5" y="566.70" dominant-baseline="central" class="ml" fill="#3edb83">1.28</text>
<line x1="379.5" y1="567.50" x2="1684" y2="567.50" stroke="#4b6ff2" stroke-width="1" stroke-dasharray="4 4"/>
<circle cx="379.5" cy="567.70" r="4" fill="#4b6ff2"/>
<path d="M1696.0 567.70 L1681.0 562.40 L1684.8 567.70 L1681.0 573.00 Z" fill="#4b6ff2"/>
<text x="1701.5" y="566.70" dominant-baseline="central" class="ml" fill="#4b6ff2">1.28</text>
<path d="M731.43 514.30 A15.00 15.00 0 1 1 758.53 514.30 C754.67 522.43 744.98 525.94 744.98 536.44 C744.98 525.94 735.28 522.43 731.43 514.30 Z" fill="#4fa7f9"/>
<text x="745.0" y="508.87" text-anchor="middle" dominant-baseline="central" class="mp" stroke="#4fa7f9">3.73</text>
<path d="M609.60 560.33 A15.00 15.00 0 1 1 636.70 560.33 C632.85 568.46 623.15 571.97 623.15 582.47 C623.15 571.97 613.46 568.46 609.60 560.33 Z" fill="#4fa7f9"/>
<text x="623.2" y="554.90" text-anchor="middle" dominant-baseline="central" class="mp" stroke="#4fa7f9">0.12</text>
<path d="M914.16 518.38 A15.00 15.00 0 1 1 941.27 518.38 C937.41 526.51 927.72 530.02 927.72 540.52 C927.72 530.02 918.02 526.51 914.16 518.38 Z" fill="#1dbcb5"/>
<text x="927.7" y="512.95" text-anchor="middle" dominant-baseline="central" class="mp" stroke="#1dbcb5">3.41</text>
<path d="M731.43 554.21 A15.00 15.00 0 1 1 758.53 554.21 C754.67 562.34 744.98 565.85 744.98 576.35 C744.98 565.85 735.28 562.34 731.43 554.21 Z" fill="#1dbcb5"/>
<text x="745.0" y="548.78" text-anchor="middle" dominant-baseline="central" class="mp" stroke="#1dbcb5">0.6</text>
<path d="M731.43 538.52 A15.00 15.00 0 1 1 758.53 538.52 C754.67 546.66 744.98 550.17 744.98 560.67 C744.98 550.17 735.28 546.66 731.43 538.52 Z" fill="#c89cf2"/>
<text x="745.0" y="533.10" text-anchor="middle" dominant-baseline="central" class="mp" stroke="#c89cf2">1.83</text>
<path d="M1523.30 561.86 A15.00 15.00 0 1 1 1550.40 561.86 C1546.54 569.99 1536.85 573.50 1536.85 584.00 C1536.85 573.50 1527.15 569.99 1523.30 561.86 Z" fill="#c89cf2"/>
<text x="1536.8" y="556.43" text-anchor="middle" dominant-baseline="central" class="mp" stroke="#c89cf2">0</text>
<path d="M609.60 333.75 A15.00 15.00 0 1 1 636.70 333.75 C632.85 341.88 623.15 345.40 623.15 355.90 C623.15 345.40 613.46 341.88 609.60 333.75 Z" fill="#de4262"/>
<text x="623.2" y="328.32" text-anchor="middle" dominant-baseline="central" class="mp" stroke="#de4262">17.89</text>
<path d="M1157.82 553.44 A15.00 15.00 0 1 1 1184.92 553.44 C1181.07 561.57 1171.37 565.08 1171.37 575.58 C1171.37 565.08 1161.67 561.57 1157.82 553.44 Z" fill="#de4262"/>
<text x="1171.4" y="548.01" text-anchor="middle" dominant-baseline="central" class="mp" stroke="#de4262">0.66</text>
<path d="M609.60 464.06 A15.00 15.00 0 1 1 636.70 464.06 C632.85 472.19 623.15 475.70 623.15 486.20 C623.15 475.70 613.46 472.19 609.60 464.06 Z" fill="#d8c22f"/>
<text x="623.2" y="458.63" text-anchor="middle" dominant-baseline="central" class="mp" stroke="#d8c22f">7.68</text>
<path d="M1279.64 553.06 A15.00 15.00 0 1 1 1306.75 553.06 C1302.89 561.19 1293.20 564.70 1293.20 575.20 C1293.20 564.70 1283.50 561.19 1279.64 553.06 Z" fill="#d8c22f"/>
<text x="1293.2" y="547.63" text-anchor="middle" dominant-baseline="central" class="mp" stroke="#d8c22f">0.69</text>
<path d="M731.43 520.16 A15.00 15.00 0 1 1 758.53 520.16 C754.67 528.30 744.98 531.81 744.98 542.31 C744.98 531.81 735.28 528.30 731.43 520.16 Z" fill="#3edb83"/>
<text x="745.0" y="514.73" text-anchor="middle" dominant-baseline="central" class="mp" stroke="#3edb83">3.27</text>
<path d="M1218.73 555.99 A15.00 15.00 0 1 1 1245.84 555.99 C1241.98 564.12 1232.28 567.63 1232.28 578.13 C1232.28 567.63 1222.59 564.12 1218.73 555.99 Z" fill="#3edb83"/>
<text x="1232.3" y="550.56" text-anchor="middle" dominant-baseline="central" class="mp" stroke="#3edb83">0.46</text>
<path d="M792.34 521.82 A15.00 15.00 0 1 1 819.44 521.82 C815.59 529.95 805.89 533.46 805.89 543.96 C805.89 533.46 796.20 529.95 792.34 521.82 Z" fill="#4b6ff2"/>
<text x="805.9" y="516.39" text-anchor="middle" dominant-baseline="central" class="mp" stroke="#4b6ff2">3.14</text>
<path d="M1218.73 554.33 A15.00 15.00 0 1 1 1245.84 554.33 C1241.98 562.47 1232.28 565.98 1232.28 576.48 C1232.28 565.98 1222.59 562.47 1218.73 554.33 Z" fill="#4b6ff2"/>
<text x="1232.3" y="548.91" text-anchor="middle" dominant-baseline="central" class="mp" stroke="#4b6ff2">0.59</text>
<line x1="1346.0" y1="285.5" x2="1371.0" y2="285.5" stroke="#4fa7f9" stroke-width="2"/>
<circle cx="1358.5" cy="285.5" r="5" fill="#4fa7f9"/>
<text x="1376.0" y="285.5" dominant-baseline="central" class="lg">星期一</text>
<line x1="1422.5" y1="285.5" x2="1447.5" y2="285.5" stroke="#1dbcb5" stroke-width="2"/>
<circle cx="1435.0" cy="285.5" r="5" fill="#1dbcb5"/>
<text x="1452.5" y="285.5" dominant-baseline="central" class="lg">星期二</text>
<line x1="1499.0" y1="285.5" x2="1524.0" y2="285.5" stroke="#c89cf2" stroke-width="2"/>
<circle cx="1511.5" cy="285.5" r="5" fill="#c89cf2"/>
<text x="1529.0" y="285.5" dominant-baseline="central" class="lg">星期三</text>
<line x1="1575.5" y1="285.5" x2="1600.5" y2="285.5" stroke="#de4262" stroke-width="2"/>
<circle cx="1588.0" cy="285.5" r="5" fill="#de4262"/>
<text x="1605.5" y="285.5" dominant-baseline="central" class="lg">星期四</text>
<line x1="1652.0" y1="285.5" x2="1677.0" y2="285.5" stroke="#d8c22f" stroke-width="2"/>
<circle cx="1664.5" cy="285.5" r="5" fill="#d8c22f"/>
<text x="1682.0" y="285.5" dominant-baseline="central" class="lg">星期五</text>
<line x1="1728.5" y1="285.5" x2="1753.5" y2="285.5" stroke="#3edb83" stroke-width="2"/>
<circle cx="1741.0" cy="285.5" r="5" fill="#3edb83"/>
<text x="1758.5" y="285.5" dominant-baseline="central" class="lg">星期六</text>
<line x1="1805.0" y1="285.5" x2="1830.0" y2="285.5" stroke="#4b6ff2" stroke-width="2"/>
<circle cx="1817.5" cy="285.5" r="5" fill="#4b6ff2"/>
<text x="1835.0" y="285.5" dominant-baseline="central" class="lg">星期日</text>
</svg>

<table class="tb"><colgroup><col style="width:83.50px"><col style="width:60.50px"><col style="width:60.00px"><col style="width:61.00px"><col style="width:60.00px"><col style="width:71.00px"><col style="width:60.50px"><col style="width:71.50px"><col style="width:61.00px"><col style="width:59.50px"><col style="width:61.00px"><col style="width:65.20px"><col style="width:65.80px"><col style="width:66.00px"><col style="width:66.00px"><col style="width:66.00px"><col style="width:65.80px"><col style="width:65.50px"><col style="width:65.70px"><col style="width:66.00px"><col style="width:65.00px"><col style="width:65.50px"><col style="width:66.50px"><col style="width:65.50px"><col style="width:67.50px"></colgroup><tr class="th"><td></td><td>0时</td><td>1时</td><td>2时</td><td>3时</td><td>4时</td><td>5时</td><td>6时</td><td>7时</td><td>8时</td><td>9时</td><td>10时</td><td>11时</td><td>12时</td><td>13时</td><td>14时</td><td>15时</td><td>16时</td><td>17时</td><td>18时</td><td>19时</td><td>20时</td><td>21时</td><td>22时</td><td>23时</td></tr><tr class="r0"><td>星期日</td><td>0.73</td><td>0.81</td><td>0.73</td><td>0.87</td><td>0.97</td><td>1.20</td><td>1.92</td><td>3.14</td><td>1.77</td><td>2.16</td><td>0.64</td><td>0.61</td><td>1.01</td><td>1.44</td><td>0.59</td><td>2.52</td><td>1.32</td><td>1.17</td><td>1.09</td><td>0.76</td><td>1.34</td><td>0.96</td><td>2.26</td><td>0.67</td></tr><tr class="r1"><td>星期一</td><td>0.85</td><td>0.85</td><td>0.79</td><td>0.71</td><td>0.12</td><td>1.64</td><td>3.73</td><td>1.50</td><td>1.93</td><td>1.26</td><td>1.75</td><td>2.42</td><td>1.05</td><td>0.72</td><td>0.79</td><td>1.35</td><td>0.66</td><td>1.49</td><td>1.87</td><td>0.64</td><td>1.18</td><td>1.60</td><td>0.86</td><td>1.08</td></tr><tr class="r0"><td>星期二</td><td>1.08</td><td>0.81</td><td>1.32</td><td>0.98</td><td>0.90</td><td>1.25</td><td>0.60</td><td>2.71</td><td>2.67</td><td>3.41</td><td>0.83</td><td>1.88</td><td>1.25</td><td>1.26</td><td>1.51</td><td>1.07</td><td>0.70</td><td>1.67</td><td>1.63</td><td>1.14</td><td>1.46</td><td>1.40</td><td>0.89</td><td>1.09</td></tr><tr class="r1"><td>星期三</td><td>0.77</td><td>0.66</td><td>0.85</td><td>1.01</td><td>1.00</td><td>1.16</td><td>1.83</td><td>1.58</td><td>1.42</td><td>1.82</td><td>0.86</td><td>1.18</td><td>0.74</td><td>1.44</td><td>1.66</td><td>0.50</td><td>0.84</td><td>0.08</td><td>0.03</td><td>0.00</td><td>0.00</td><td>0.00</td><td>0.00</td><td>0.00</td></tr><tr class="r0"><td>星期四</td><td>1.05</td><td>0.97</td><td>1.30</td><td>0.88</td><td>17.89</td><td>1.64</td><td>11.81</td><td>1.33</td><td>1.58</td><td>3.85</td><td>1.46</td><td>3.55</td><td>1.65</td><td>0.66</td><td>1.35</td><td>0.72</td><td>1.01</td><td>1.13</td><td>2.25</td><td>0.91</td><td>1.36</td><td>0.85</td><td>0.90</td><td>0.92</td></tr><tr class="r1"><td>星期五</td><td>0.86</td><td>1.02</td><td>1.43</td><td>0.75</td><td>7.67</td><td>0.73</td><td>2.89</td><td>2.22</td><td>1.19</td><td>3.36</td><td>1.99</td><td>2.00</td><td>0.88</td><td>1.89</td><td>2.01</td><td>0.69</td><td>0.81</td><td>1.37</td><td>1.53</td><td>0.81</td><td>1.35</td><td>0.90</td><td>2.41</td><td>1.70</td></tr><tr class="r0"><td>星期六</td><td>0.83</td><td>0.80</td><td>1.82</td><td>0.97</td><td>0.97</td><td>0.57</td><td>3.27</td><td>1.60</td><td>1.40</td><td>2.37</td><td>1.20</td><td>1.21</td><td>2.21</td><td>1.02</td><td>0.46</td><td>0.99</td><td>0.84</td><td>1.69</td><td>1.16</td><td>0.77</td><td>1.33</td><td>0.75</td><td>1.82</td><td>0.64</td></tr></table>

<!-- taskbar -->
<div class="abs" style="left:0;top:1040px;width:1920px;height:8px;background:#22211d;overflow:hidden">
<div class="abs" style="left:1815px;top:4px;font-size:12px;color:#fff;line-height:14px;letter-spacing:0.3px">10:26</div>
<div class="abs" style="left:1915px;top:0;width:1px;height:8px;background:#9a9a96"></div></div>
<div class="abs" style="left:687px;top:1040px;width:48px;height:8px;background:#5a5a55"></div>
</body></html>
